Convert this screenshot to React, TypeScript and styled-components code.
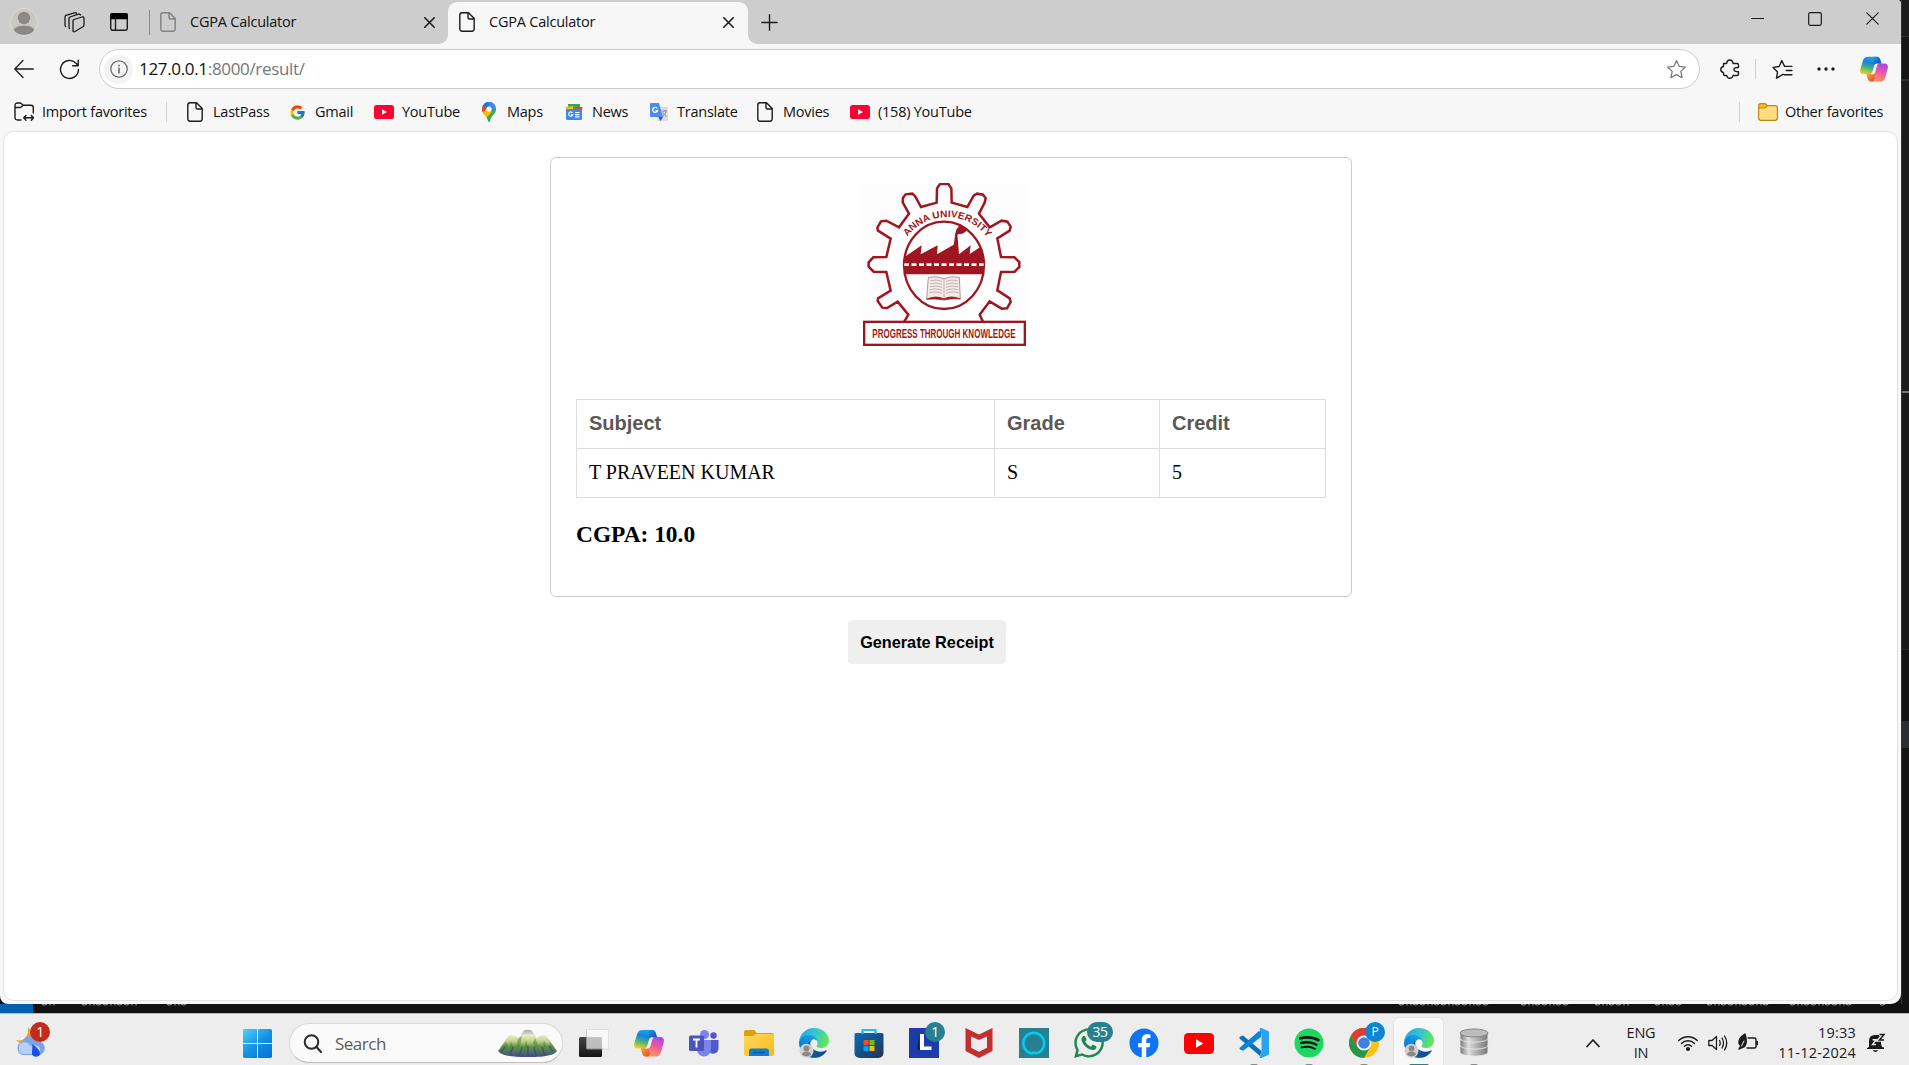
import React from "react";
import styled, { createGlobalStyle } from "styled-components";
import { FcGoogle } from "react-icons/fc";
import { FaWhatsapp, FaSpotify, FaFacebook } from "react-icons/fa";

const GlobalStyle = createGlobalStyle`
  * { box-sizing: border-box; }
  html, body { margin: 0; padding: 0; background: #141414; overflow: hidden; }
  svg { display: block; flex: none; }
`;

const ui = `"Open Sans", "Noto Sans", sans-serif`;

/* ---------- frame ---------- */
const Desktop = styled.div`
  width: 1909px;
  height: 1065px;
  display: flex;
  flex-direction: column;
  background: #121212;
  overflow: hidden;
  font-family: ${ui};
  color: #111;
`;
const Upper = styled.div`
  display: flex;
  height: 1004px;
`;
const Browser = styled.div`
  width: 1901px;
  height: 1004px;
  display: flex;
  flex-direction: column;
  background: #f7f7f7;
  border-radius: 0 4px 10px 8px;
  overflow: hidden;
`;
const EditorEdge = styled.div`
  width: 8px;
  display: flex;
  flex-direction: column;
  border-left: 1px solid #333;
`;
const EdgePart = styled.div<{ $h: number; $c: string }>`
  height: ${(p) => p.$h}px;
  background: ${(p) => p.$c};
`;

/* ---------- tab strip ---------- */
const TabStrip = styled.div`
  display: flex;
  align-items: center;
  height: 44px;
  background: #cdcdcd;
`;
const Cell = styled.div<{ $w: number; $lift?: number }>`
  width: ${(p) => p.$w}px;
  padding-bottom: ${(p) => p.$lift ?? 0}px;
  display: flex;
  justify-content: center;
  align-items: center;
  flex: none;
`;
const VLine = styled.div<{ $h: number; $c?: string }>`
  width: 1px;
  height: ${(p) => p.$h}px;
  background: ${(p) => p.$c ?? "#d0d0d0"};
  flex: none;
`;
const Tab = styled.div<{ $active?: boolean }>`
  position: relative;
  display: flex;
  align-items: center;
  width: ${(p) => (p.$active ? 300 : 298)}px;
  height: ${(p) => (p.$active ? 42 : 44)}px;
  align-self: flex-end;
  padding: ${(p) => (p.$active ? "0 14px 2px 11px" : "0 13px 0 10px")};
  background: ${(p) => (p.$active ? "#f7f7f7" : "transparent")};
  border-radius: 9px 9px 0 0;
  ${(p) =>
    p.$active &&
    `&::before, &::after {
      content: ""; position: absolute; bottom: 0; width: 9px; height: 9px;
    }
    &::before { left: -9px; background: radial-gradient(circle at 0 0, transparent 8.5px, #f7f7f7 9px); }
    &::after { right: -9px; background: radial-gradient(circle at 100% 0, transparent 8.5px, #f7f7f7 9px); }`}
`;
const TabTitle = styled.span`
  flex: 1;
  margin-left: 14px;
  padding-bottom: 2px;
  font-size: 14.5px;
  letter-spacing: -0.22px;
  white-space: nowrap;
`;
const Spacer = styled.div`
  flex: 1;
`;

/* ---------- toolbar ---------- */
const Toolbar = styled.div`
  display: flex;
  align-items: center;
  height: 50px;
`;
const Address = styled.div`
  display: flex;
  flex: none;
  align-items: center;
  width: 1601px;
  height: 40px;
  margin-left: 8px;
  padding: 0 12px 0 4px;
  background: #fff;
  border: 1px solid #cbcbcb;
  border-radius: 20px;
`;
const InfoDisc = styled.div`
  width: 29px;
  height: 29px;
  border-radius: 50%;
  background: #f3f3f3;
  display: flex;
  align-items: center;
  justify-content: center;
`;
const Url = styled.span`
  margin-left: 6px;
  flex: 1;
  padding-bottom: 2px;
  font-size: 17px;
  letter-spacing: -0.33px;
  color: #767676;
  b { font-weight: 400; color: #111; }
`;

/* ---------- favourites ---------- */
const Favorites = styled.div`
  display: flex;
  align-items: center;
  height: 37px;
  padding: 0 0 1px 14px;
`;
const FavItem = styled.div<{ $w: number; $g?: number }>`
  display: flex;
  align-items: center;
  gap: ${(p) => p.$g ?? 8}px;
  width: ${(p) => p.$w}px;
  flex: none;
`;
const FavLabel = styled.span`
  padding-bottom: 1px;
  font-size: 14.5px;
  letter-spacing: -0.24px;
  white-space: nowrap;
`;
const Fav = ({ w, g, icon, label }: { w: number; g?: number; icon: React.ReactNode; label: string }) => (
  <FavItem $w={w} $g={g}>
    {icon}
    <FavLabel>{label}</FavLabel>
  </FavItem>
);

/* ---------- page ---------- */
const Page = styled.main`
  flex: 1;
  margin: 0 3px 3px 3px;
  width: 1895px;
  display: flex;
  flex-direction: column;
  background: #fff;
  border: 1px solid #e2e2e2;
  border-radius: 11px;
`;
const Card = styled.section`
  width: 802px;
  height: 440px;
  margin: 25px 0 0 546px;
  padding: 25px;
  border: 1px solid #ccc;
  border-radius: 6px;
  display: flex;
  flex-direction: column;
`;
const Crest = styled.div`
  height: 163px;
  margin: 0 0 53px 287px;
`;
const Table = styled.table`
  width: 750px;
  border-collapse: collapse;
  table-layout: fixed;
  font: 20px "Liberation Serif", serif;
  color: #000;
  td, th {
    height: 49px;
    border: 1px solid #ddd;
    padding: 0 12px 2px;
    text-align: left;
  }
  th {
    font: bold 20px "Liberation Sans", sans-serif;
    color: #5a5856;
  }
`;
const Cgpa = styled.h3`
  margin: 23px 0 0;
  font: bold 23.4px/27px "Liberation Serif", serif;
  color: #000;
`;
const Receipt = styled.button`
  width: 158px;
  height: 44px;
  margin: 23px 0 0 844px;
  padding: 0;
  border: 0;
  border-radius: 4px;
  background: #efefef;
  color: #000;
  font: bold 16.25px "Liberation Sans", sans-serif;
  white-space: nowrap;
`;

/* ---------- editor status strip ---------- */
const StatusStrip = styled.div`
  display: flex;
  height: 9px;
  background: #121212;
  overflow: hidden;
`;
const Remote = styled.div`
  width: 33px;
  background: #0460ae;
`;

/* ---------- taskbar ---------- */
const Taskbar = styled.footer`
  display: flex;
  align-items: center;
  height: 52px;
  background: #ededed;
  border-top: 1px solid #b9b9b9;
  padding-top: 7px;
`;
const Weather = styled.div`
  position: relative;
  width: 227px;
  height: 32px;
  margin-left: 16px;
`;
const Badge = styled.span<{ $x: number; $y: number; $bg: string; $w?: number; $s?: number }>`
  position: absolute;
  left: ${(p) => p.$x}px;
  top: ${(p) => p.$y}px;
  width: ${(p) => p.$w ?? 20}px;
  height: 20px;
  border-radius: 10px;
  background: ${(p) => p.$bg};
  color: #fff;
  font-size: ${(p) => p.$s ?? 14}px;
  line-height: 20px;
  text-align: center;
  letter-spacing: -0.4px;
`;
const SearchBox = styled.div`
  display: flex;
  align-items: center;
  width: 274px;
  height: 40px;
  margin-left: 17px;
  margin-right: 3px;
  padding: 0 5px 0 13px;
  border: 1px solid #d9d9d9;
  border-bottom-color: #bdbdbd;
  border-radius: 20px;
  background: #fafafa;
`;
const SearchText = styled.span`
  flex: 1;
  margin-left: 13px;
  font-size: 17px;
  letter-spacing: -0.5px;
  color: #5c5c5c;
`;
const TaskButton = styled.div<{ $active?: boolean }>`
  position: relative;
  width: ${(p) => (p.$active ? 49 : 55)}px;
  margin: ${(p) => (p.$active ? "0 3px" : "0")};
  height: 50px;
  align-self: center;
  display: flex;
  align-items: center;
  justify-content: center;
  border-radius: 5px;
  flex: none;
  ${(p) => p.$active && `background:#f8f8f8; box-shadow: 0 0 0 1px #e4e4e4;`}
`;
const Running = styled.i<{ $w: number; $c: string }>`
  position: absolute;
  bottom: 0px;
  left: calc(50% - ${(p) => p.$w / 2}px);
  width: ${(p) => p.$w}px;
  height: 4px;
  border-radius: 2px;
  background: ${(p) => p.$c};
`;
const Tray = styled.div`
  display: flex;
  align-items: center;
  margin-left: auto;
  height: 46px;
`;
const TwoLines = styled.div<{ $w: number; $right?: boolean }>`
  width: ${(p) => p.$w}px;
  text-align: ${(p) => (p.$right ? "right" : "center")};
  font-size: 14.5px;
  line-height: 20px;
  letter-spacing: ${(p) => (p.$right ? 0.2 : -0.2)}px;
  color: #1b1b1b;
  white-space: nowrap;
  flex: none;
`;

/* ---------- icons ---------- */
const Stroke = ({ s = 20, v = 20, d, c = "#1b1b1b", w = 1.3, children }: { s?: number; v?: number; d?: string; c?: string; w?: number; children?: React.ReactNode }) => (
  <svg width={s} height={s} viewBox={`0 0 ${v} ${v}`} fill="none" stroke={c} strokeWidth={w} strokeLinecap="round" strokeLinejoin="round">
    {d && <path d={d} />}
    {children}
  </svg>
);
const FileIcon = ({ c = "#1b1b1b" }: { c?: string }) => (
  <svg width="16" height="20" viewBox="0 0 16 20" fill="none" stroke={c} strokeWidth="1.4" strokeLinejoin="round">
    <path d="M3 .8h6.5L15.2 6.5V17a2.2 2.2 0 0 1-2.2 2.2H3A2.2 2.2 0 0 1 .8 17V3A2.2 2.2 0 0 1 3 .8zM9 1v4.5A1.5 1.5 0 0 0 10.500 7H15" />
  </svg>
);
const CloseIcon = ({ s = 11, w = 1.6 }: { s?: number; w?: number }) => <Stroke s={s} v={s} w={w} d={`M.8 .8L${s - 0.8} ${s - 0.8}M${s - 0.8} .8L.8 ${s - 0.8}`} />;
const YouTube = ({ w = 20, c = "#ff0033" }: { w?: number; c?: string }) => (
  <svg width={w} height={w * 0.7} viewBox="0 0 20 14">
    <rect width="20" height="14" rx="2.8" fill={c} />
    <path d="M8 4.200v5.600L13 7z" fill="#fff" />
  </svg>
);
const Copilot = ({ s = 30 }: { s?: number }) => (
  <svg width={s} height={s} viewBox="0 0 30 30">
    <defs>
      <linearGradient id="cpA" x1=".6" y1="0" x2=".3" y2="1">
        <stop offset="0" stopColor="#1fa6f0" /><stop offset=".35" stopColor="#1583d8" /><stop offset=".65" stopColor="#49b37c" /><stop offset="1" stopColor="#f2cf1d" />
      </linearGradient>
      <linearGradient id="cpB" x1=".8" y1="0" x2=".3" y2="1">
        <stop offset="0" stopColor="#a046ee" /><stop offset=".45" stopColor="#ef5a9d" /><stop offset="1" stopColor="#ffa34a" />
      </linearGradient>
      <linearGradient id="cpC" x1="0" y1="0" x2="1" y2="1">
        <stop offset="0" stopColor="#1a9ee8" /><stop offset="1" stopColor="#1b3fb8" />
      </linearGradient>
      <linearGradient id="cpD" x1="0" y1="0" x2="1" y2="1">
        <stop offset="0" stopColor="#f5b320" /><stop offset="1" stopColor="#ea3f45" />
      </linearGradient>
    </defs>
    <path d="M8.500 2H18c2.500 0 3.300 1.500 4 4l.9 3h-3.500c-2.600 0-3.600 1.200-4.200 3.500L14 18c-.6 2-1.500 2.600-3 2.600H4C.8 20.600-.4 18.500.3 15.500L3 6.500C4 3.200 5.500 2 8.500 2z" fill="url(#cpA)" />
    <path d="M15.500 2H18c2.500 0 3.300 1.500 4 4l.9 3h-3.500c-1.800 0-2.900.6-3.600 1.700L14 5z" fill="url(#cpC)" />
    <path d="M21.500 28.500H12c-2.500 0-3.300-1.500-4-4l-1-3.900h3.600c2.600 0 3.600-1.200 4.200-3.500L16.500 11c.5-1.500 1.500-2 3-2H26c3.200 0 4.400 2.100 3.700 5.500L27 24c-1 3.300-2.500 4.500-5.500 4.500z" fill="url(#cpB)" />
    <path d="M14.500 28.500H12c-2.500 0-3.300-1.500-4-4l-1-3.900h3.600c1.800 0 2.900-.6 3.600-1.700L16 25z" fill="url(#cpD)" />
    <path d="M17 9.500h3.200c-1.600.5-1.900 1.800-2.300 3.200L16.400 18c-.6 2-1.600 2.600-3.300 2.600h-2.800c2-.3 2.600-1.500 3-3l1.400-4.600c.4-1.600.8-2.900 2.300-3.500z" fill="#f3f1f4" />
  </svg>
);
const Edge = () => (
  <svg width="30" height="30" viewBox="0 0 256 256">
    <defs>
      <linearGradient id="edA" x1=".2" y1=".6" x2="1" y2=".6"><stop offset="0" stopColor="#0c59a4" /><stop offset="1" stopColor="#114a8b" /></linearGradient>
      <linearGradient id="edB" x1=".8" y1=".2" x2=".3" y2="1"><stop offset="0" stopColor="#1b9de2" /><stop offset=".5" stopColor="#0b86dc" /><stop offset="1" stopColor="#0667b4" /></linearGradient>
      <linearGradient id="edC" x1="0" y1=".3" x2="1" y2=".6"><stop offset="0" stopColor="#2aa5e6" /><stop offset=".45" stopColor="#33c3d4" /><stop offset="1" stopColor="#66e850" /></linearGradient>
    </defs>
    <g transform="translate(-4.630 -4.920)">
      <path fill="url(#edA)" d="M235.680 195.460a93.730 93.730 0 0 1-10.540 4.710 101.870 101.870 0 0 1-35.900 6.460c-47.320 0-88.540-32.550-88.540-74.320A31.480 31.480 0 0 1 117.130 105c-42.800 1.800-53.800 46.400-53.800 72.530 0 73.880 68.090 81.370 82.760 81.370 7.910 0 19.840-2.300 27-4.560l1.310-.44a128.340 128.340 0 0 0 66.600-52.800 4 4 0 0 0-5.320-5.640z" />
      <path fill="url(#edB)" d="M110.340 246.340A79.200 79.200 0 0 1 87.600 225a80.720 80.720 0 0 1 29.530-120c3.120-1.470 8.450-4.130 15.540-4a32.350 32.350 0 0 1 25.690 13 31.880 31.880 0 0 1 6.360 18.660c0-.21 24.460-79.600-80-79.600-43.900 0-80 41.660-80 78.210a130.150 130.150 0 0 0 12.110 56 128 128 0 0 0 156.380 67.110 75.550 75.550 0 0 1-62.780-8z" />
      <path fill="url(#edC)" d="M156.940 153.780c-.81 1.050-3.300 2.500-3.300 5.660 0 2.610 1.700 5.120 4.720 7.230 14.380 10 41.490 8.680 41.560 8.680a59.560 59.560 0 0 0 30.270-8.350 61.380 61.380 0 0 0 30.430-52.880c.26-22.410-8-37.310-11.340-43.910C228.090 28.760 182.350 4.920 132.610 4.920a128 128 0 0 0-128 126.200c.48-36.540 36.800-66.050 80-66.050 3.500 0 23.460.34 42 10.070 16.340 8.580 24.900 18.940 30.850 29.210 6.180 10.670 7.280 24.150 7.280 29.520s-2.740 13.330-7.800 19.910z" />
    </g>
    <circle cx="64" cy="194" r="60" fill="#d3d0ce" />
    <circle cx="64" cy="174" r="25" fill="#8b8785" />
    <path d="M26 226c0-34 76-34 76 0-16 20-60 20-76 0z" fill="#8b8785" />
  </svg>
);
const CrestArt = () => {
  const red = "#a01620";
  return (
    <svg width="163" height="163" viewBox="54 54 489 489">
      <defs>
        <clipPath id="disc"><ellipse cx="297" cy="301" rx="119" ry="130" /></clipPath>
        <path id="arc" d="M187 215A150 150 0 0 1 430 222" />
      </defs>
      <rect x="54" y="54" width="489" height="489" fill="#fdfdfd" />
      <path
        fill="#fff" stroke={red} strokeWidth="7.500"
        d="M178 470L190 449L158 410L126 429L112 428L98 408L99 400L137 377L124 321L86 320L71 305V292L85 277L124 276L137 221L99 197L97 188L108 169L124 167L162 187L192 146L173 112L174 98L182 88L202 86L210 93L228 126L275 113L276 70L285 57H310L319 70L320 113L367 126L386 92L396 86L414 89L422 100L419 113L402 146L434 187L470 167L487 170L497 185L494 197L457 220L468 276L508 277L523 291V306L509 320L468 321L457 376L494 400L497 411L486 430L470 431L434 409L404 449L414 470"
      />
      <ellipse cx="297" cy="301" rx="120" ry="131" fill="#fff" stroke={red} strokeWidth="7" />
      <g clipPath="url(#disc)">
        <path fill={red} d="M170 275L180 275L230 241L227 268L278 241L276 268L326 239L331 205L337 205L342 268L377 241L374 267L420 237V328H170z" />
        <path fill={red} d="M329 213C334 202 331 192 341 186L338 174L375 186C362 198 358 207 347 207C340 207 335 209 329 213z" />
        <path d="M177 299H420" stroke="#fff" strokeWidth="8" strokeDasharray="15 7.500" />
      </g>
      <path d="M250 337Q276 332 297 341Q318 332 343 337L346 401Q318 392 297 401Q274 392 245 401z" fill="#f3eae8" stroke="#8a6a6a" strokeWidth="2" />
      <path d="M297 341V400M256 347Q276 342 291 349M256 356Q276 351 291 358M255 365Q276 360 291 367M254 374Q276 369 291 376M253 383Q276 378 291 385M303 349Q318 342 338 347M303 358Q318 351 338 356M303 367Q318 360 339 365M303 376Q318 369 340 374M303 385Q318 378 341 383" fill="none" stroke="#b59c9b" strokeWidth="2.200" />
      <path d="M245 403Q274 390 297 402Q318 390 346 402Q320 400 297 405Q270 400 245 403z" fill={red} stroke={red} strokeWidth="2" />
      <text fill={red} fontFamily="Liberation Sans, sans-serif" fontWeight="700" fontSize="29">
        <textPath href="#arc" textLength="278" lengthAdjust="spacingAndGlyphs">ANNA UNIVERSITY</textPath>
      </text>
      <rect x="57.500" y="470.500" width="482" height="69" fill="#fff" stroke={red} strokeWidth="7" />
      <text transform="translate(82 519) scale(.668 1)" fill={red} fontFamily="Liberation Sans, sans-serif" fontWeight="700" fontSize="36">PROGRESS THROUGH KNOWLEDGE</text>
    </svg>
  );
};

const WeatherIcon = () => (
  <svg width="30" height="30" viewBox="0 0 30 30">
    <path d="M12 0c5 5 7 10 3 15-4 4-10 3-15-2 5 1 8 0 10-3 2-3 2-6 2-10z" fill="#f3a125" />
    <path d="M7 28a7 7 0 0 1-.6-13.500A8.500 8.500 0 0 1 22 14.200 7 7 0 0 1 23.500 28z" fill="#7fa3e8" />
    <path d="M7 27a6 6 0 0 1 0-11.500c3-.8 6 1 7.500 3.500 3-2 8-1 9.500 2 .8 3-1 5-3 6z" fill="#b4d0fb" />
    <path d="M16 17c4 2.500 8 6.500 8 9.500 0 4-7 4.500-8 .5-.4-3 1-6 0-10z" fill="#1c4fe6" />
  </svg>
);
const WinLogo = () => (
  <svg width="29" height="29" viewBox="0 0 29 29">
    <defs><linearGradient id="win" gradientUnits="userSpaceOnUse" x1="0" y1="0" x2="24" y2="29"><stop offset="0" stopColor="#4fd0fc" /><stop offset=".55" stopColor="#1591e2" /><stop offset="1" stopColor="#0577d3" /></linearGradient></defs>
    <path fill="url(#win)" d="M1 0h13v14H0V1zM15 0h13l1 1v13H15zM0 15h14v14H1l-1-1zM15 15h14v13l-1 1H15z" />
  </svg>
);
const Mountains = () => (
  <svg width="59" height="27" viewBox="0 0 59 27">
    <defs>
      <linearGradient id="mt" x1="0" y1="0" x2="0" y2="1"><stop offset="0" stopColor="#a9a5b3" /><stop offset=".2" stopColor="#e6ecc6" /><stop offset=".42" stopColor="#c3d08c" /><stop offset=".62" stopColor="#5f9440" /><stop offset=".85" stopColor="#4a6a6a" /><stop offset="1" stopColor="#434a8c" /></linearGradient>
    </defs>
    <path fill="url(#mt)" d="M0 21C4 16 8 8 12 5h4l4 3C23 5 25 1 27 0h6c2 2 4 5 6 8l4-3h4c5 4 8 11 12 16-3 4-10 6-29 6S3 25 0 21z" />
    <path fill="#3f8a34" opacity=".55" d="M5 16l3-4 2 5-3 4zM13 11l2 7-4 3zM20 9l4-3-2 10-4 4zM28 10l2 7-4 3zM37 8l3 7-2 4-3-6zM46 10l3 8-4-2zM52 12l4 7-4-2z" />
    <path stroke="#3c4386" strokeWidth="1.500" fill="none" opacity=".7" d="M3 22l4-5M12 25l3-8M21 26l3-9M30 26V16M38 26l-2-9M47 25l-3-8M55 22l-4-6" />
  </svg>
);
const TaskView = () => (
  <svg width="30" height="30" viewBox="0 0 30 30">
    <defs><linearGradient id="tv" x1="0" y1="0" x2="0" y2="1"><stop offset="0" stopColor="#454545" /><stop offset="1" stopColor="#161616" /></linearGradient></defs>
    <rect x="0" y="9" width="23" height="20" rx="1.500" fill="url(#tv)" />
    <rect x="7.500" y="1.500" width="22" height="19.500" rx="1" fill="#fff" opacity=".68" stroke="#bbb" />
    <path d="M8 1.500h21.500v19H23V9H8z" fill="#f7f7f7" />
  </svg>
);
const Teams = () => (
  <svg width="30" height="30" viewBox="0 0 30 30">
    <circle cx="15.500" cy="6.500" r="4.500" fill="#7b83eb" /><circle cx="24.500" cy="7.500" r="3.200" fill="#5059c9" />
    <path d="M20 12h9.500v8a5.500 5.500 0 0 1-9.500 4z" fill="#5059c9" />
    <path d="M8 12h14v9.500a7 7 0 0 1-14 0z" fill="#7b83eb" />
    <rect y="7.500" width="15" height="15.500" rx="1.500" fill="#4b53bc" />
    <path d="M4 11.500h7M7.500 11.500v8" stroke="#fff" strokeWidth="1.800" />
  </svg>
);
const Explorer = () => (
  <svg width="30" height="30" viewBox="0 0 30 30">
    <defs><linearGradient id="ex" x1="0" y1="0" x2="1" y2="1"><stop offset="0" stopColor="#ffda62" /><stop offset="1" stopColor="#fdb714" /></linearGradient></defs>
    <path d="M0 4a2 2 0 0 1 2-2h8l3 3h15a2 2 0 0 1 2 2v4H0z" fill="#dfa00d" />
    <path d="M0 8h9l3-2h18v20a2 2 0 0 1-2 2H2a2 2 0 0 1-2-2z" fill="url(#ex)" />
    <path d="M5 28v-5a2.500 2.500 0 0 1 2.500-2.500h15A2.500 2.500 0 0 1 25 23v5z" fill="#117ccb" /><path d="M9 24.500h12" stroke="#0a4f8c" strokeWidth="1.200" />
  </svg>
);
const Store = () => (
  <svg width="30" height="30" viewBox="0 0 30 30">
    <defs><linearGradient id="st" x1="0" y1="0" x2="1" y2="1"><stop offset="0" stopColor="#0a6dbd" /><stop offset="1" stopColor="#243252" /></linearGradient></defs>
    <path d="M8.500 7V2h13v5" fill="none" stroke="#1fbdf2" strokeWidth="2" />
    <path d="M.5 6.500A1.500 1.500 0 0 1 2 5h26a1.500 1.500 0 0 1 1.500 1.500V25a5 5 0 0 1-5 5h-19a5 5 0 0 1-5-5z" fill="url(#st)" />
    <path d="M8.500 6V3M21.500 6V3" stroke="#1fbdf2" strokeWidth="2" />
    <path fill="#f25022" d="M9.500 12h5v5h-5z" /><path fill="#7fba00" d="M15.500 12h5v5h-5z" /><path fill="#00a4ef" d="M9.500 18h5v5h-5z" /><path fill="#ffb900" d="M15.500 18h5v5h-5z" />
  </svg>
);
const LApp = () => (
  <svg width="30" height="30" viewBox="0 0 30 30">
    <rect width="30" height="30" fill="#1f3aae" />
    <path d="M10 6L8 21l3 2z" fill="#0b2a4a" />
    <path d="M11 6h4v12.500h7.500V22H11z" fill="#fff" />
  </svg>
);
const McAfee = () => (
  <svg width="30" height="30" viewBox="0 0 30 30">
    <path fill="#c4302f" fillRule="evenodd" d="M1.500 0L15 6.500 28.500 0v23L15 30 1.500 23zM7 8.500v11.300l8 4 8-4V8.500L15 12z" />
  </svg>
);
const Alexa = () => (
  <svg width="30" height="30" viewBox="0 0 30 30">
    <rect width="30" height="30" fill="#26808f" />
    <path d="M13 25.500A10.400 10.400 0 1 1 17.500 25.300C16 25 14 23.500 13 25.500z" fill="none" stroke="#04caf8" strokeWidth="2.600" />
  </svg>
);
const VsCode = () => (
  <svg width="30" height="30" viewBox="0 0 30 30">
    <path d="M1 19.500L20 3l2 5L4 22.500 .5 21z" fill="#0a7fcb" />
    <path d="M4 7.500L22.500 23 21 28 .5 10.500V9z" fill="#0b70b8" />
    <path d="M.5 21L22 2v7L4 22.800z" fill="#0a86d4" />
    <path d="M22.500 0L29 3q1 .5 1 1.500v21q0 1-1 1.500l-6.500 3q-1 .3-2-.7L22.500 23V7L20.500.8q1-1.100 2-.8z" fill="#2aa4f0" />
  </svg>
);
const Chrome = () => (
  <svg width="30" height="30" viewBox="0 0 30 30">
    <circle cx="15" cy="15" r="15" fill="#fbc116" />
    <path d="M15 15L2 7.500A15 15 0 0 1 28 7.500H15z" fill="#dc3e33" />
    <path d="M2 7.500A15 15 0 0 0 15 30l6.300-11.200L15 15 8.700 18.600z" fill="#279648" />
    <path d="M15 0A15 15 0 0 1 28 7.500H15L8.600 18.600 2 7.500A15 15 0 0 1 15 0z" fill="#dc3e33" />
    <circle cx="15" cy="15" r="7.500" fill="#fff" /><circle cx="15" cy="15" r="5.800" fill="#3f7de8" />
  </svg>
);
const Database = () => (
  <svg width="30" height="30" viewBox="0 0 30 30">
    <defs><linearGradient id="db"><stop offset="0" stopColor="#777" /><stop offset=".3" stopColor="#dedede" /><stop offset=".65" stopColor="#a9a9a9" /><stop offset="1" stopColor="#777" /></linearGradient></defs>
    {[18, 11, 4].map((y) => (
      <path key={y} d={`M1 ${y}v6c0 5.500 28 5.500 28 0v-6z`} fill="url(#db)" stroke="#e9e9e9" strokeWidth=".9" />
    ))}
    <ellipse cx="15" cy="5" rx="14" ry="4" fill="#bcbcbc" stroke="#858585" />
  </svg>
);
const MapsPin = () => (
  <svg width="14" height="20" viewBox="0 0 14 20">
    <defs><clipPath id="pin"><path d="M7 0a7 7 0 0 1 7 7c0 5-5 6-6 12q-1 2-2 0C5 13 0 12 0 7a7 7 0 0 1 7-7z" /></clipPath></defs>
    <g clipPath="url(#pin)">
      <path fill="#34a853" d="M0 0h14v20H0z" /><path fill="#4285f4" d="M2 0h12v5L6 12z" /><path fill="#1a73e8" d="M0 0h10L3 7z" /><path fill="#ea4335" d="M0 2l5 4-4 6H0z" /><path fill="#fbbc04" d="M0 11L6 6l4 4-6 6z" />
      <path fill="#4285f4" d="M6 0h6l1 3-4 4z" />
    </g>
    <circle cx="7" cy="7" r="2.600" fill="#fff" />
  </svg>
);
const NewsIcon = () => (
  <svg width="18" height="18" viewBox="0 0 18 18">
    <path fill="#34a853" d="M3 1h12v6H3z" /><path fill="#ea4335" d="M10 4l7.500 0-1 5H10z" /><path fill="#fbbc04" d="M.5 4L8 3v5H1z" />
    <rect x="1" y="6" width="16" height="11" rx="1.200" fill="#4285f4" />
    <path fill="none" stroke="#fff" strokeWidth="1.200" d="M7.500 9.800a2.100 2.100 0 1 0 .3 2H6M10 9.500h4.500M10 11.700h4.500M10 13.800h4.500" />
  </svg>
);
const TranslateIcon = () => (
  <svg width="18" height="18" viewBox="0 0 18 18">
    <rect x="7" y="4" width="11" height="14" rx="1" fill="#dcdcdc" />
    <path d="M1 0h8l4 14H1a1 1 0 0 1-1-1V1a1 1 0 0 1 1-1z" fill="#4c8bf5" /><path d="M8.500 14H13l-2.500 4z" fill="#2a56c6" />
    <path fill="none" stroke="#fff" strokeWidth="1.300" d="M7.300 5.500a2.500 2.500 0 1 0 .2 2.200H5.500" />
    <path fill="none" stroke="#7b8a8f" d="M12 8h5M14.500 7v1M16 8.500c-.5 2-1.500 3.500-3 4.500M13 9.500c.8 2 2 3 3.500 4" />
  </svg>
);
const Avatar = () => (
  <svg width="28" height="28" viewBox="0 0 28 28">
    <defs><clipPath id="av"><circle cx="14" cy="14" r="13" /></clipPath></defs>
    <circle cx="14" cy="14" r="13.500" fill="#cac8c5" stroke="#dcdad8" />
    <g clipPath="url(#av)" fill="#8b8886"><circle cx="14" cy="10" r="6.200" /><ellipse cx="14" cy="25" rx="12" ry="7.500" /></g>
  </svg>
);
const star = "M10 1.500L12.500 7l6 .7-4.400 4.100 1.200 6L10 14.900l-5.300 2.900 1.200-6L1.500 7.700l6-.7z";

/* ---------- data ---------- */
const apps: { node: React.ReactNode; run?: boolean; active?: boolean; badge?: React.ReactNode }[] = [
  { node: <TaskView /> },
  { node: <Copilot /> },
  { node: <Teams /> },
  { node: <Explorer /> },
  { node: <Edge /> },
  { node: <Store /> },
  { node: <LApp />, badge: <Badge $x={29} $y={4} $bg="#26808f">1</Badge> },
  { node: <McAfee /> },
  { node: <Alexa /> },
  { node: <FaWhatsapp size={34} color="#1d8a4d" />, badge: <Badge $x={26} $y={4} $w={26} $bg="#26808f">35</Badge> },
  { node: <FaFacebook size={30} color="#0f74f2" style={{ background: "radial-gradient(#fff 62%, transparent 64%)" }} /> },
  { node: <YouTube w={30} c="#f00" /> },
  { node: <VsCode />, run: true },
  { node: <FaSpotify size={30} color="#1ed760" style={{ background: "radial-gradient(#111 62%, transparent 64%)" }} />, run: true },
  { node: <Chrome />, run: true, badge: <Badge $x={29} $y={4} $bg="#0d86cf" $s={12}>P</Badge> },
  { node: <Edge />, active: true },
  { node: <Database />, run: true },
];

const StatusBits = styled.span<{ $l: number; $w: number }>`
  margin-left: ${(p) => p.$l}px;
  width: ${(p) => p.$w}px;
  height: 9px;
  flex: none;
`;
/* Only the bottoms of the status bar glyphs show below the browser window. */
const clippedMarks = (n: number) => (
  <svg width={n * 7} height="2" viewBox={`0 0 ${n * 7} 2`} fill="none" stroke="#9a9a9a" strokeWidth="1.200">
    {Array.from({ length: n }, (_, i) => (
      <path key={i} d={i % 3 === 1 ? `M${i * 7 + 1} 0v1.500M${i * 7 + 5} 0v1.500` : `M${i * 7} 0q2.500 2 5 0`} />
    ))}
  </svg>
);

export default function App() {
  return (
    <Desktop>
      <GlobalStyle />
      <Upper>
        <Browser>
          <TabStrip>
            <Cell $w={48}><Avatar /></Cell>
            <Cell $w={52}>
              <Stroke s={21} v={21} w={1.3}>
                <path d="M10 7.500L18 5q2-.5 2 1.500V13q0 1.500-1.500 2L11 19.500Q9 20.500 9 18.500V9q0-1 1-1.500zM5.500 16.500Q5 16 5 15V6.500Q5 5.500 6 5l8.500-2.800Q16 2 16.500 3M1.500 14.500Q1 14 1 13V5q0-1.200 1-1.600L10.500.8Q12 .5 12.500 1.300" />
              </Stroke>
            </Cell>
            <Cell $w={38}>
              <Stroke s={18} v={18} w={1.4}>
                <rect x=".7" y=".7" width="16.600" height="16.600" rx="2.200" />
                <path d="M1 1h16v4.500H1z" fill="#000" stroke="#000" /><path d="M5.500 5v12" />
              </Stroke>
            </Cell>
            <Cell $w={11} />
            <VLine $h={25} $c="#8b8b8b" />
            <Tab>
              <FileIcon c="#808080" />
              <TabTitle>CGPA Calculator</TabTitle>
              <CloseIcon />
            </Tab>
            <Tab $active>
              <FileIcon />
              <TabTitle>CGPA Calculator</TabTitle>
              <CloseIcon />
            </Tab>
            <Cell $w={43}><Stroke s={17} v={17} w={1.4} d="M8.500 .8v15.400M.8 8.500h15.400" /></Cell>
            <Spacer />
            <Cell $w={58} $lift={7}><Stroke s={13} v={13} w={1.2} d="M.5 6.500h12" /></Cell>
            <Cell $w={58} $lift={6}>
              <Stroke s={14} v={14} w={1.2}><rect x=".7" y=".7" width="12.600" height="12.600" rx="1.500" /></Stroke>
            </Cell>
            <Cell $w={57} $lift={7}><CloseIcon s={13} w={1.2} /></Cell>
          </TabStrip>

          <Toolbar>
            <Cell $w={48}><Stroke s={20} d="M19.300 10H1M9 1.500L.8 10 9 18.500" /></Cell>
            <Cell $w={42}><Stroke s={21} v={21} w={1.4} d="M19.500 10.500a9 9 0 1 1-2.500-6.300L19 6.500M19.200 1.300v5.400h-5.500" /></Cell>
            <Cell $w={1} />
            <Address>
              <InfoDisc>
                <Stroke s={18} v={18} c="#6f6f6f" w={1.3}><circle cx="9" cy="9" r="8.200" /><path d="M9 8.300v4.500M9 5.400v.3" strokeWidth="1.700" /></Stroke>
              </InfoDisc>
              <Url><b>127.0.0.1</b>:8000/result/</Url>
              <Stroke s={21} c="#7a7a7a" w={1.2} d={star} />
            </Address>
            <Cell $w={5} />
            <Cell $w={50}>
              <Stroke s={20} w={1.4} d="M3.500 4.500h3.200Q7 1 9.800 1t3.200 3.500h4Q18.500 4.500 18.500 6v2.500Q14 8.300 14 10.500t4.500 2.200V15q0 1.500-1.500 1.500h-4Q12.500 19.300 9.800 19.300T6.700 16.500H5Q3.500 16.500 3.500 15v-1.500Q.8 13 .8 10.500T3.500 7.500z" />
            </Cell>
            <VLine $h={20} />
            <Cell $w={53}>
              <Stroke s={21} w={1.3} d="M6.800 17l-2.500 1.300 1-6L1 8l5.800-.9L9.300 1.500 12 7h7M13.500 11h5.500M11.500 15h7.500M5.500 17.500l5-2.900" />
            </Cell>
            <Cell $w={34}>
              <svg width="18" height="4" viewBox="0 0 18 4" fill="#1b1b1b"><circle cx="2" cy="2" r="1.700" /><circle cx="9" cy="2" r="1.700" /><circle cx="16" cy="2" r="1.700" /></svg>
            </Cell>
            <Cell $w={4} />
            <Cell $w={54}><Copilot s={28} /></Cell>
          </Toolbar>

          <Favorites>
            <Fav
              w={152}
              label="Import favorites"
              icon={<Stroke s={20} w={1.4} d="M7 18H3.500Q1 18 1 15.500V3.500Q1 1 3.500 1h3l2.800 2.300H17q2.300 0 2.300 2.300V11M1 5.500h5.500L9.300 3.300M10 15.800h9.500M12 13.500l-2.300 2.300L12 18.200M17.300 13.500l2.200 2.300-2.200 2.400" />}
            />
            <VLine $h={20} />
            <Cell $w={20} />
            <Fav w={102} g={10} icon={<FileIcon />} label="LastPass" />
            <Fav w={85} g={9} icon={<FcGoogle size={17} />} label="Gmail" />
            <Fav w={108} icon={<YouTube />} label="YouTube" />
            <Fav w={83} g={11} icon={<MapsPin />} label="Maps" />
            <Fav w={85} g={9} icon={<NewsIcon />} label="News" />
            <Fav w={107} g={9} icon={<TranslateIcon />} label="Translate" />
            <Fav w={93} g={10} icon={<FileIcon />} label="Movies" />
            <Fav w={140} icon={<YouTube />} label="(158) YouTube" />
            <Spacer />
            <VLine $h={20} />
            <Cell $w={18} />
            <Fav
              w={143}
              g={7}
              label="Other favorites"
              icon={
                <svg width="20" height="18" viewBox="0 0 20 18" stroke="#b98a14" strokeWidth="1.200">
                  <path d="M.6 4V15Q.6 17.400 3 17.400H17Q19.400 17.400 19.400 15V5Q19.400 2.600 17 2.600H9z" fill="#ffdd80" /><path d="M.6 5V2.500Q.6.600 2.500.600H7L9.300 2.600 7 5z" fill="#f2bd1d" />
                </svg>
              }
            />
          </Favorites>

          <Page>
            <Card>
              <Crest><CrestArt /></Crest>
              <Table>
                <colgroup><col style={{ width: 418 }} /><col style={{ width: 165 }} /><col style={{ width: 166 }} /></colgroup>
                <thead><tr><th>Subject</th><th>Grade</th><th>Credit</th></tr></thead>
                <tbody><tr><td>T PRAVEEN KUMAR</td><td>S</td><td>5</td></tr></tbody>
              </Table>
              <Cgpa>CGPA: 10.0</Cgpa>
            </Card>
            <Receipt>Generate Receipt</Receipt>
          </Page>
        </Browser>
        <EditorEdge>
          <EdgePart $h={36} $c="#1b1b1b" />
          <EdgePart $h={1} $c="#303030" />
          <EdgePart $h={42} $c="#161616" />
          <EdgePart $h={2} $c="#2f2f2f" />
          <EdgePart $h={310} $c="#1c1c1c" />
          <EdgePart $h={2} $c="#777" />
          <EdgePart $h={256} $c="#1a1a1a" />
          <EdgePart $h={1} $c="#2a2a2a" />
          <EdgePart $h={71} $c="#141414" />
          <EdgePart $h={27} $c="#2d2d34" />
          <EdgePart $h={256} $c="#141414" />
        </EditorEdge>
      </Upper>

      <StatusStrip>
        <Remote />
        <StatusBits $l={9} $w={15}>{clippedMarks(2)}</StatusBits>
        <StatusBits $l={25} $w={62}>{clippedMarks(8)}</StatusBits>
        <StatusBits $l={23} $w={24}>{clippedMarks(3)}</StatusBits>
        <StatusBits $l={1208} $w={92}>{clippedMarks(13)}</StatusBits>
        <StatusBits $l={30} $w={51}>{clippedMarks(7)}</StatusBits>
        <StatusBits $l={23} $w={37}>{clippedMarks(5)}</StatusBits>
        <StatusBits $l={23} $w={26}>{clippedMarks(4)}</StatusBits>
        <StatusBits $l={26} $w={61}>{clippedMarks(9)}</StatusBits>
        <StatusBits $l={22} $w={64}>{clippedMarks(9)}</StatusBits>
        <StatusBits $l={26} $w={10}>{clippedMarks(1)}</StatusBits>
      </StatusStrip>

      <Taskbar>
        <Weather>
          <WeatherIcon />
          <Badge $x={14} $y={-5} $bg="#c42b1c">1</Badge>
        </Weather>
        <WinLogo />
        <SearchBox>
          <Stroke s={19} v={19} c="#2b2b2b" w={2}><circle cx="8.500" cy="8" r="6.800" /><path d="M13.500 13l4.500 5" /></Stroke>
          <SearchText>Search</SearchText>
          <Mountains />
        </SearchBox>
        {apps.map((a, i) => (
          <TaskButton key={i} $active={a.active}>
            {a.node}
            {a.badge}
            {a.run && <Running $w={8} $c="#8a8a8a" />}
            {a.active && <Running $w={20} $c="#26808f" />}
          </TaskButton>
        ))}
        <Tray>
          <Cell $w={34}><Stroke s={14} v={14} w={1.7} d="M1 10.500L7 4l6 6.500" /></Cell>
          <Cell $w={10} />
          <TwoLines $w={42}>ENG<br />IN</TwoLines>
          <Cell $w={16} />
          <Cell $w={20}>
            <Stroke s={20} w={1.500}><path d="M.8 7.500a13 13 0 0 1 18.400 0M3.500 10.500a9.200 9.200 0 0 1 13 0M6.500 13.300a5 5 0 0 1 7 0" /><circle cx="10" cy="16" r="1.300" fill="#1b1b1b" /></Stroke>
          </Cell>
          <Cell $w={10} />
          <Cell $w={20}><Stroke s={20} w={1.300} d="M.8 7.500H4L8.500 3.500v13L4 12.500H.8zM11.500 7.500q1.500 2.500 0 5M14 5q3 5 0 10M16.500 3q4.500 7 0 14" /></Cell>
          <Cell $w={10} />
          <Cell $w={20}>
            <Stroke s={20} w={1.400}>
              <path d="M10 5h6.500Q18 5 18 6.500v7q0 1.500-1.500 1.500H9M19.400 8.500v3" />
              <path d="M7 1C2 4 .5 7 1 10.500L3 13l-2 3 3-1.500C8 14 9.500 9 7 1z" fill="#1b1b1b" />
              <path d="M3.500 13L6 8" stroke="#ededed" strokeWidth="1" />
            </Stroke>
          </Cell>
          <TwoLines $w={98} $right>19:33<br />11-12-2024</TwoLines>
          <Cell $w={10} />
          <Cell $w={20}>
            <svg width="19" height="20" viewBox="0 0 19 20" fill="#1b1b1b">
              <path d="M2 14V8Q2 2 8 2h6v9l1 3 2 .5V16H0v-1zM5.500 17.300h6q-3 3.500-6 0z" />
              <path d="M5.500 6.800H9L5.500 11.500H9" fill="none" stroke="#ededed" strokeWidth="1.400" />
              <path d="M12 1.500h5l-5 5.500h5" fill="none" stroke="#ededed" strokeWidth="3.600" />
              <path d="M12.500 1.500h4.500l-4.500 5.500H17" fill="none" stroke="#1b1b1b" strokeWidth="1.500" />
            </svg>
          </Cell>
          <Cell $w={23} />
        </Tray>
      </Taskbar>
    </Desktop>
  );
}
